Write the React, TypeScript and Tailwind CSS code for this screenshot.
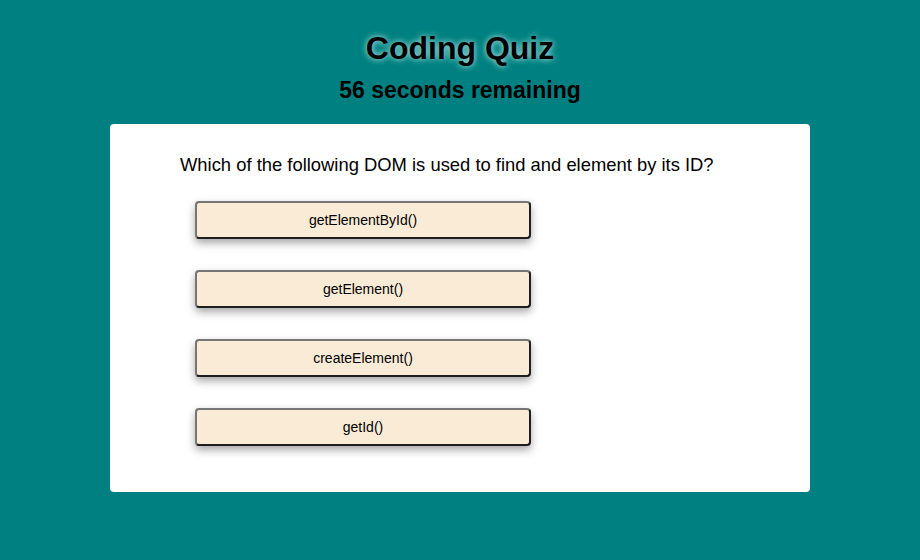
const choices = ["getElementById()", "getElement()", "createElement()", "getId()"];

export default function App() {
  return (
    <main className="min-h-[560px] bg-[#008080] pt-[30px] font-['Liberation_Sans',Arial,sans-serif] text-black">
      {/* Header */}
      <h1 className="text-center text-[32px] leading-[37px] font-bold [text-shadow:0_0_6px_#c8f4f4]">
        Coding Quiz
      </h1>
      <p className="mt-[10px] text-center text-[23px] leading-[26px] font-bold">
        56 seconds remaining
      </p>

      {/* Question card */}
      <section className="mx-auto mt-[21px] w-[700px] rounded-[4px] bg-white pt-[30px] pb-[46px] pl-[70px]">
        <h2 className="text-[18.4px] leading-[21px]">
          Which of the following DOM is used to find and element by its ID?
        </h2>
        <div className="mt-[26px] ml-[15px] flex flex-col gap-[31px]">
          {choices.map((c) => (
            <button
              key={c}
              className="h-[38px] w-[336px] rounded-[4px] border-2 border-t-[#767676] border-l-[#767676] border-r-[#1e1e1e] border-b-[#1e1e1e] bg-[#faebd7] text-[14px] shadow-[0_4px_8px_rgba(0,0,0,0.35)]"
            >
              {c}
            </button>
          ))}
        </div>
      </section>
    </main>
  );
}
